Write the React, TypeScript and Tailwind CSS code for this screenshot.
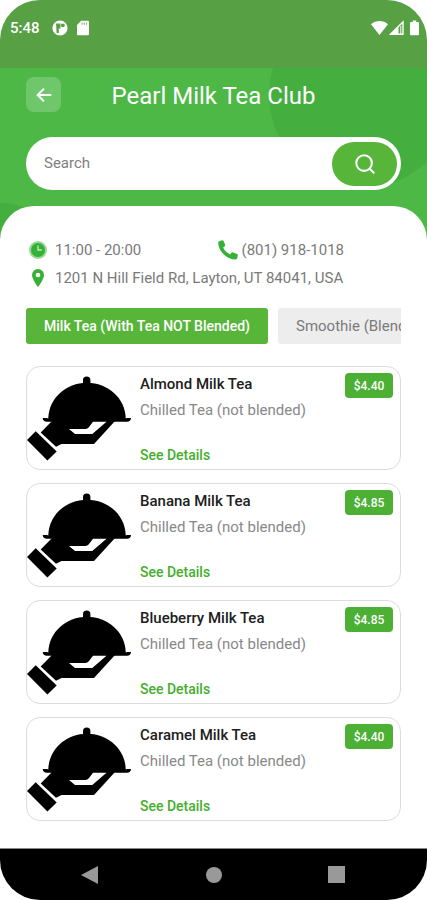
import type { ReactNode } from 'react';

interface MenuItem {
  name: string;
  description: string;
  price: string;
}

const items: MenuItem[] = [
  { name: 'Almond Milk Tea', description: 'Chilled Tea (not blended)', price: '$4.40' },
  { name: 'Banana Milk Tea', description: 'Chilled Tea (not blended)', price: '$4.85' },
  { name: 'Blueberry Milk Tea', description: 'Chilled Tea (not blended)', price: '$4.85' },
  { name: 'Caramel Milk Tea', description: 'Chilled Tea (not blended)', price: '$4.40' },
];

function StatusBar() {
  return (
    <div className="flex h-[68px] items-start justify-between bg-[#58a044] pt-[18px] pr-2 pl-[10px] text-white">
      <div className="flex h-5 items-center">
        <span className="text-[15px] leading-5 font-medium">5:48</span>
        <svg className="ml-3 size-4" viewBox="0 0 16 16">
          <circle cx="8" cy="8" r="7.6" fill="#fff" />
          <path d="M4 3.5h4.5v5H6.8V13H4.6z" fill="#58a044" />
          <circle cx="10.8" cy="5.3" r="1.9" fill="#58a044" />
        </svg>
        <svg className="ml-[9px] h-4 w-3" viewBox="0 0 12 16">
          <path d="M4.2.8H11a1 1 0 0 1 1 1v12.4a1 1 0 0 1-1 1H1a1 1 0 0 1-1-1V5z" fill="#fff" />
          <path d="M4.5 2.5h1.2v2.2H4.5zM6.7 2.5h1.2v2.2H6.7zM8.9 2.5h1.2v2.2H8.9z" fill="#8fbd83" />
        </svg>
      </div>
      <div className="flex h-5 items-center">
        <svg className="h-4 w-[17px]" viewBox="0 0 17 16">
          <path d="M0 4.2C5-.1 12-.1 17 4.2L8.5 15z" fill="#fff" />
        </svg>
        <svg className="ml-px h-4 w-[15px]" viewBox="0 0 15 16">
          <path d="M14 2v12.2H1.5z" fill="none" stroke="#fff" strokeWidth="1.4" />
          <path d="M9.5 6v8.5H1z" fill="#fff" />
          <path d="M11.8 6v8" stroke="#fff" strokeWidth="1" />
        </svg>
        <svg className="ml-[6px] h-4 w-[9px]" viewBox="0 0 9 16">
          <path d="M2.8.6h3.4V2H8a1 1 0 0 1 1 1v11.2a1 1 0 0 1-1 1H1a1 1 0 0 1-1-1V3a1 1 0 0 1 1-1h1.8z" fill="#fff" />
        </svg>
      </div>
    </div>
  );
}

function Header() {
  return (
    <header className="relative overflow-hidden bg-[#4db846] px-[26px] pt-2 pb-[52px]">
      <div className="absolute -top-[66px] -right-7 size-[186px] rounded-full bg-[#44ae3f]" />
      <div className="absolute top-[135px] -left-16 size-32 rounded-full bg-[#44ae3f]" />
      <div className="relative flex h-9 items-end">
        <button type="button" aria-label="Back" className="flex size-[35px] items-center justify-center rounded-lg bg-white/20">
          <svg className="size-4" viewBox="0 0 16 16" fill="none" stroke="#fff" strokeWidth="2" strokeLinecap="round" strokeLinejoin="round">
            <path d="M14.5 8H1.8M7.4 2.2 1.6 8l5.8 5.8" />
          </svg>
        </button>
        <h1 className="mr-[35px] flex-1 text-center text-2xl leading-8 text-white">Pearl Milk Tea Club</h1>
      </div>
      <form className="relative mt-[25px] flex h-[53px] items-center rounded-full bg-white pr-1 pl-[18px]">
        <input
          type="text"
          aria-label="Search"
          placeholder="Search"
          className="min-w-0 flex-1 bg-transparent text-[15px] text-[#777] outline-none placeholder:text-[#808080]"
        />
        <button type="button" aria-label="Search menu" className="flex h-11 w-[65px] items-center justify-center rounded-full bg-[#57b63a]">
          <svg className="size-[22px]" viewBox="0 0 24 24" fill="none" stroke="#fff" strokeWidth="2.2" strokeLinecap="round">
            <circle cx="11" cy="11" r="8.5" />
            <path d="m17.2 17.2 4.3 4.3" />
          </svg>
        </button>
      </form>
    </header>
  );
}

function InfoLine({ icon, children }: { icon: ReactNode; children: ReactNode }) {
  return (
    <div className="flex h-7 items-center">
      <span className="flex w-[29px] shrink-0 justify-start">{icon}</span>
      <span className="whitespace-nowrap">{children}</span>
    </div>
  );
}

function ShopInfo() {
  return (
    <section className="text-[15px] text-[#7a7a7a]">
      <div className="grid grid-cols-2">
        <InfoLine
          icon={
            <svg className="ml-[3px] size-[18px]" viewBox="0 0 18 18">
              <circle cx="9" cy="9" r="9" fill="#9bd795" />
              <circle cx="9" cy="9" r="7" fill="#35b136" />
              <path d="M9 4.5V9h3.8" fill="none" stroke="#c5ecc3" strokeWidth="1.3" />
            </svg>
          }
        >
          11:00 - 20:00
        </InfoLine>
        <div className="flex h-7 items-center gap-1 pl-1">
          <svg className="size-5" viewBox="0 0 20 20">
            <path
              d="M1.2 1.2 4 .2c.8-.2 1.3.1 1.6.8L7 4.5c.3.8.1 1.4-.5 1.9L5.200 7.500c1.400 3.100 3.600 5.300 6.800 6.900l1.400-1.600c.5-.6 1.100-.7 1.800-.4l3.700 1.700c.8.4 1.100.9.9 1.700l-.8 2.800c-.2.7-.7 1-1.400 1C8.500 19.400.3 11 .2 2.600c0-.7.3-1.200 1-1.400z"
              fill="#35b136"
            />
          </svg>
          <span className="whitespace-nowrap">(801) 918-1018</span>
        </div>
      </div>
      <InfoLine
        icon={
          <svg className="ml-[6px] h-[18px] w-3" viewBox="0 0 12 18">
            <path d="M6 0a6 6 0 0 0-6 6c0 4.5 6 12 6 12s6-7.5 6-12a6 6 0 0 0-6-6z" fill="#35b136" />
            <circle cx="6" cy="6" r="2.3" fill="#fff" />
          </svg>
        }
      >
        1201 N Hill Field Rd, Layton, UT 84041, USA
      </InfoLine>
    </section>
  );
}

function Categories() {
  return (
    <nav aria-label="Categories" className="mt-4 flex gap-[10px] overflow-hidden">
      <button type="button" className="h-9 shrink-0 rounded-[3px] bg-[#57b63a] px-[18px] text-sm font-medium whitespace-nowrap text-white">
        Milk Tea (With Tea NOT Blended)
      </button>
      <button type="button" className="h-9 shrink-0 rounded-[3px] bg-[#ededed] px-[18px] text-[15px] whitespace-nowrap text-[#7a7a7a]">
        Smoothie (Blended)
      </button>
    </nav>
  );
}

function ServingDish() {
  return (
    <svg className="mt-[9px] h-[85px] w-[104px] shrink-0" viewBox="0 0 104 85" fill="#000">
      <path d="M56 8V4.2a3.7 3.7 0 0 1 7.4 0V8z" />
      <path d="M21.3 44V42C22 22 39 6.700 60 6.700S98 22 98.700 42v2z" />
      <path d="M15.7 42h4l2 .6h76.6l2-.6h3.700c0 2.200-1.500 3.800-4 3.800H20c-2.600 0-4.300-1.600-4.300-3.800z" />
      <path d="M25 45 13.700 56.500 29 70.700l5.500-2.800H67L88 45z" />
      <path d="M42 53h15.500c2 0 3.300-.6 4.500-2l4-5.200h13.500L65.300 58H48z" fill="#fff" />
      <path d="M8.700 55.300 29.700 75.500l-9.300 9L0 64z" />
    </svg>
  );
}

function MenuCard({ item }: { item: MenuItem }) {
  return (
    <li className="flex h-[104px] rounded-[14px] border border-[#dcdcdc] bg-white">
      <ServingDish />
      <div className="ml-[9px] flex flex-1 flex-col items-start pt-[7px] pb-1">
        <h2 className="text-[15px] leading-5 font-medium text-[#202020]">{item.name}</h2>
        <p className="mt-[6px] text-[15px] leading-5 whitespace-nowrap text-[#888]">{item.description}</p>
        <a href="#details" className="mt-auto text-sm leading-5 font-medium text-[#45ae2d]">
          See Details
        </a>
      </div>
      <span className="mt-[6px] mr-[7px] flex h-[25px] w-12 shrink-0 items-center justify-center rounded bg-[#4cb035] text-xs font-medium text-white">
        {item.price}
      </span>
    </li>
  );
}

function NavigationBar() {
  return (
    <div className="flex h-[52px] items-center justify-between border-t border-[#888] bg-black pr-[82px] pl-[79px]">
      <button type="button" aria-label="Back">
        <svg className="size-5" viewBox="0 0 20 20" fill="#999">
          <path d="M19 1v18L2 10z" />
        </svg>
      </button>
      <button type="button" aria-label="Home" className="size-4 rounded-full bg-[#999]" />
      <button type="button" aria-label="Recent apps" className="size-[17px] bg-[#999]" />
    </div>
  );
}

export default function App() {
  return (
    <div className="flex min-h-screen flex-col overflow-hidden rounded-[40px] bg-white font-[Roboto,sans-serif]">
      <StatusBar />
      <Header />
      <main className="relative -mt-[36px] flex-1 rounded-t-[34px] bg-white px-[26px] pt-[30px]">
        <ShopInfo />
        <Categories />
        <ul className="mt-[22px] flex flex-col gap-[13px]">
          {items.map((item) => (
            <MenuCard key={item.name} item={item} />
          ))}
        </ul>
      </main>
      <NavigationBar />
    </div>
  );
}
